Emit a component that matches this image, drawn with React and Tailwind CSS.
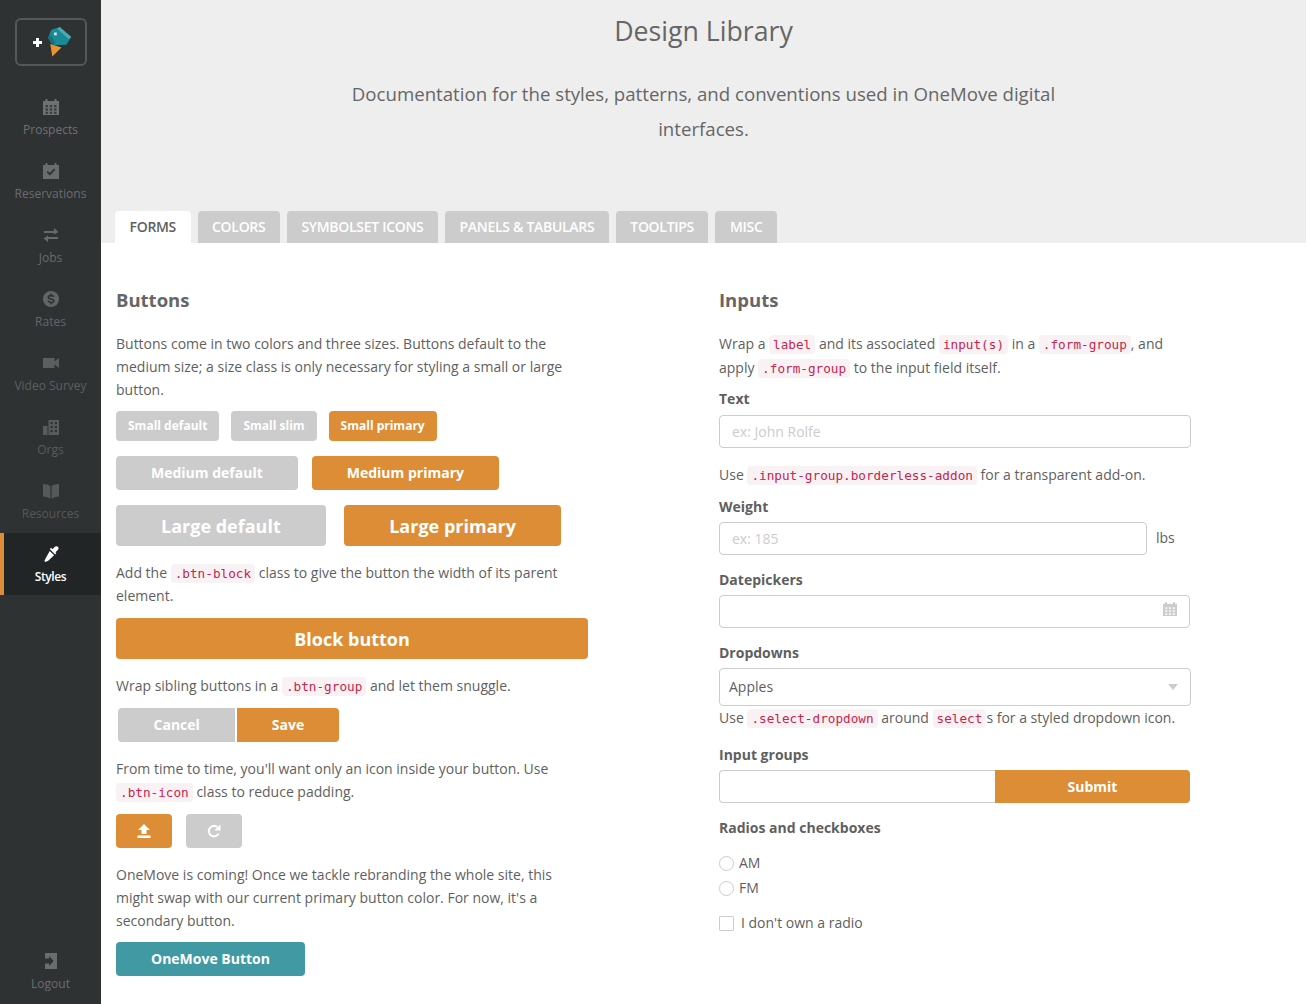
const font = { fontFamily: '"Open Sans", sans-serif' };

function Cal({ className, hole = "#2f3233" }) {
  return (
    <svg viewBox="0 0 16 16" className={className} fill="currentColor">
      <path d="M0 2h2.5V0h2v2h7V0h2v2H16v14H0z" />
      <g fill={hole} className="opacity-80">
        <rect x="2.5" y="6" width="2.5" height="2.2" />
        <rect x="6.7" y="6" width="2.5" height="2.2" />
        <rect x="11" y="6" width="2.5" height="2.2" />
        <rect x="2.5" y="9.4" width="2.5" height="2.2" />
        <rect x="6.7" y="9.4" width="2.5" height="2.2" />
        <rect x="11" y="9.4" width="2.5" height="2.2" />
        <rect x="2.5" y="12.8" width="2.5" height="2" />
        <rect x="6.7" y="12.8" width="2.5" height="2" />
        <rect x="11" y="12.8" width="2.5" height="2" />
      </g>
    </svg>
  );
}

const navIcons = {
  Prospects: <Cal className="w-4 h-4" />,
  Reservations: (
    <svg viewBox="0 0 16 16" className="w-4 h-4" fill="currentColor">
      <path d="M0 2h2.5V0h2v2h7V0h2v2H16v14H0z" />
      <path d="M4.2 8.6l2.6 2.6 5-5" fill="none" stroke="#2f3233" strokeWidth="1.9" />
    </svg>
  ),
  Jobs: (
    <svg viewBox="0 0 16 14" className="w-4 h-[14px]" fill="currentColor">
      <path d="M1 3h10V0l4.5 4L11 6.5V5H1zM15 9H5V7.5L.5 10.5 5 14v-3h10z" />
    </svg>
  ),
  Rates: (
    <svg viewBox="0 0 16 16" className="w-4 h-4">
      <circle cx="8" cy="8" r="8" fill="currentColor" />
      <path d="M11 5.6C10.2 4.5 5.3 3.9 5.3 6.2c0 2.4 5.6 1.3 5.6 3.8 0 2.2-4.8 1.8-6-.4M8 2.4v2M8 11.6v2" fill="none" stroke="#2f3233" strokeWidth="1.6" />
    </svg>
  ),
  "Video Survey": (
    <svg viewBox="0 0 16 10" className="w-4 h-[10px]" fill="currentColor">
      <path d="M0 0h11.5v3.5L16 0v10l-4.5-3.5V10H0z" />
    </svg>
  ),
  Orgs: (
    <svg viewBox="0 0 16 16" className="w-4 h-4" fill="currentColor">
      <path d="M0 7h4.5v9H0zM5.5 1H16v15H5.5z" />
      <g fill="#2f3233">
        <rect x="7.5" y="3" width="2.2" height="2.2" />
        <rect x="11.8" y="3" width="2.2" height="2.2" />
        <rect x="7.5" y="7" width="2.2" height="2.2" />
        <rect x="11.8" y="7" width="2.2" height="2.2" />
        <rect x="7.5" y="11" width="2.2" height="2.2" />
        <rect x="11.8" y="11" width="2.2" height="2.2" />
      </g>
    </svg>
  ),
  Resources: (
    <svg viewBox="0 0 16 16" className="w-4 h-4" fill="currentColor">
      <path d="M0 1c3 0 6 .8 7.4 2.2V16C6 14.6 3 13.6 0 13.6zM16 1c-3 0-6 .8-7.4 2.2V16c1.4-1.4 4.4-2.4 7.4-2.4z" />
    </svg>
  ),
  Styles: (
    <svg viewBox="0 0 16 16" className="w-4 h-4" fill="currentColor">
      <path d="M9.5 3.2L11.6 1c1-1.1 2.4-1.1 3.3-.2s.9 2.3-.2 3.3l-2.2 2.1.9.9-1.3 1.3-5.3-5.3 1.3-1.3z" />
      <path d="M6.7 4.9l4.4 4.4-5.9 5.4c-.7.6-1.3.4-1.8.8-.5.4-1 .7-1.6.1s-.3-1.1.1-1.6c.4-.5.2-1.1.8-1.8z" />
    </svg>
  ),
};

const nav = [
  { label: "Prospects", color: "text-[#6e7172]" },
  { label: "Reservations", color: "text-[#6a6d6e]" },
  { label: "Jobs", color: "text-[#676a6b]" },
  { label: "Rates", color: "text-[#636667]" },
  { label: "Video Survey", color: "text-[#5c5f60]" },
  { label: "Orgs", color: "text-[#595c5d]" },
  { label: "Resources", color: "text-[#565859]" },
];

function Sidebar() {
  return (
    <aside className="w-[101px] shrink-0 bg-[#2f3233] flex flex-col">
      <div className="mt-[18px] ml-[15px] w-[72px] h-12 border-2 border-[#55585a] rounded-md flex items-center pl-[16px] gap-[6px]">
        <span className="w-[9px] h-[9px] relative shrink-0">
          <span className="absolute left-0 right-0 top-[3px] h-[3px] bg-white" />
          <span className="absolute top-0 bottom-0 left-[3px] w-[3px] bg-white" />
        </span>
        <svg viewBox="0 0 24 30" className="w-6 h-[30px] shrink-0">
          <path d="M2.3 17L13.5 20.5 4.3 29.5z" fill="#e8952f" />
          <path d="M0 11L3.3 2.7 11.7 0 23.3 10 18.3 17.7 5 18.3z" fill="#1a8a96" />
          <path d="M11.7 0L23.3 10 20.5 12 9.5 2z" fill="#4aaab4" />
          <path d="M0 11L5 18.3 7.5 16 2.5 8z" fill="#15727d" />
          <rect x="6" y="5.5" width="2.8" height="2.8" fill="#c9e6e9" />
        </svg>
      </div>
      <div className="mt-[19px] flex flex-col">
        {nav.map((item) => (
          <div key={item.label} className={`h-[64px] flex flex-col items-center pt-[14px] ${item.color}`}>
            <div className="h-4 flex items-center">{navIcons[item.label]}</div>
            <span className="text-xs leading-4 mt-[7px] whitespace-nowrap">{item.label}</span>
          </div>
        ))}
      </div>
      <div className="h-[62px] bg-[#222526] border-l-4 border-[#dd8d36] flex flex-col items-center pt-[13px] pr-1 text-white">
        <div className="h-4 flex items-center">{navIcons.Styles}</div>
        <span className="text-xs leading-4 mt-[7px] font-semibold tracking-[-0.4px]">Styles</span>
      </div>
      <div className="mt-auto h-[51px] flex flex-col items-center text-[#6a6d6e]">
        <svg viewBox="0 0 12 16" className="w-3 h-4" fill="currentColor">
          <path d="M0 0h12v16H0z" />
          <path d="M0 5.6h4.2V3l4.4 5-4.4 5v-2.6H0z" fill="#2f3233" />
        </svg>
        <span className="text-xs leading-4 mt-[7px]">Logout</span>
      </div>
    </aside>
  );
}

const tabs = ["FORMS", "COLORS", "SYMBOLSET ICONS", "PANELS & TABULARS", "TOOLTIPS", "MISC"];

function Header() {
  return (
    <header className="h-[243px] bg-[#eeeeee] flex flex-col text-[#666666]">
      <h1 className="text-[26.7px] leading-[36px] mt-[13px] text-center">Design Library</h1>
      <p className="text-[18.65px] leading-[35px] mt-[27px] mx-auto w-[740px] text-center">
        Documentation for the styles, patterns, and conventions used in OneMove digital interfaces.
      </p>
      <nav className="mt-auto ml-[14px] flex gap-[7px]">
        {tabs.map((t, i) => (
          <div
            key={t}
            className={`h-8 px-[14.5px] rounded-t flex items-center text-sm font-semibold tracking-[-0.3px] ${
              i === 0 ? "bg-white text-[#5f5f5f]" : "bg-[#cccccc] text-white"
            }`}
          >
            {t}
          </div>
        ))}
      </nav>
    </header>
  );
}

function Code({ children }) {
  return (
    <code className="bg-[#f9f2f4] text-[#c7254e] rounded px-1 py-[2px] leading-none text-[12.7px] font-['DejaVu_Sans_Mono',monospace]">
      {children}
    </code>
  );
}

function Btn({ className = "", children }) {
  return (
    <button className={`rounded font-bold text-white flex items-center justify-center ${className}`}>{children}</button>
  );
}

function Label({ className = "", children }) {
  return <div className={`h-[23px] leading-[23px] font-bold text-[#5f5f5f] ${className}`}>{children}</div>;
}

function Field({ className = "", placeholder }) {
  return (
    <input
      placeholder={placeholder}
      className={`block h-[33px] border border-[#cccccc] rounded px-3 bg-white outline-none placeholder:text-[#cccccc] ${className}`}
    />
  );
}

function ButtonsColumn() {
  return (
    <section className="w-[472px] shrink-0">
      <h2 className="text-[18.5px] font-bold leading-7 text-[#666666]">Buttons</h2>
      <p className="mt-[18px]">
        Buttons come in two colors and three sizes. Buttons default to the medium size; a size class is only necessary for styling a small or large button.
      </p>
      <div className="mt-[10px] flex gap-3">
        <Btn className="h-[30px] px-3 text-xs bg-[#cccccc]">Small default</Btn>
        <Btn className="h-[30px] px-3 text-xs bg-[#cccccc]">Small slim</Btn>
        <Btn className="h-[30px] px-3 text-xs bg-[#dd8d36]">Small primary</Btn>
      </div>
      <div className="mt-[15px] flex gap-[14px]">
        <Btn className="h-[34px] px-[35px] text-sm bg-[#cccccc]">Medium default</Btn>
        <Btn className="h-[34px] px-[35px] text-sm bg-[#dd8d36]">Medium primary</Btn>
      </div>
      <div className="mt-[15px] flex gap-[18px]">
        <Btn className="h-[41px] px-[45px] text-lg bg-[#cccccc]">Large default</Btn>
        <Btn className="h-[41px] px-[45.5px] text-lg bg-[#dd8d36]">Large primary</Btn>
      </div>
      <p className="mt-[15px]">
        Add the <Code>.btn-block</Code> class to give the button the width of its parent element.
      </p>
      <Btn className="mt-[11px] w-full h-[41px] text-lg bg-[#dd8d36]">Block button</Btn>
      <p className="mt-[15px]">
        Wrap sibling buttons in a <Code>.btn-group</Code> and let them snuggle.
      </p>
      <div className="mt-[11px] ml-[2px] flex gap-[2px]">
        <Btn className="h-[34px] px-[35.5px] text-sm bg-[#cccccc] rounded-r-none">Cancel</Btn>
        <Btn className="h-[34px] px-[34.5px] text-sm bg-[#dd8d36] rounded-l-none">Save</Btn>
      </div>
      <p className="mt-[15px]">
        From time to time, you'll want only an icon inside your button. Use <Code>.btn-icon</Code> class to reduce padding.
      </p>
      <div className="mt-[11px] flex gap-[14px]">
        <Btn className="h-[34px] w-14 bg-[#dd8d36]">
          <svg viewBox="0 0 14 14" className="w-[14px] h-[14px]" fill="currentColor">
            <path d="M7 0l6 6H9.5v4h-5V6H1zM.5 11.5h13V14H.5z" />
          </svg>
        </Btn>
        <Btn className="h-[34px] w-14 bg-[#cccccc]">
          <svg viewBox="0 0 14 14" className="w-[14px] h-[14px]" fill="none" stroke="currentColor" strokeWidth="2">
            <path d="M11.6 9.6A5.2 5.2 0 1 1 10.4 3.2" />
            <path d="M13.5 0.5v6h-6z" fill="currentColor" stroke="none" />
          </svg>
        </Btn>
      </div>
      <p className="mt-[15px]">
        OneMove is coming! Once we tackle rebranding the whole site, this might swap with our current primary button color. For now, it's a secondary button.
      </p>
      <Btn className="mt-[10px] h-[34px] px-[35px] text-sm bg-[#4099a3]">OneMove Button</Btn>
    </section>
  );
}

function InputsColumn() {
  return (
    <section className="w-[472px] shrink-0">
      <h2 className="text-[18.5px] font-bold leading-7 text-[#666666]">Inputs</h2>
      <p className="mt-[18px] leading-6">
        Wrap a <Code>label</Code> and its associated <Code>input(s)</Code> in a <Code>.form-group</Code>, and apply <Code>.form-group</Code> to the input field itself.
      </p>
      <Label className="mt-[7px]">Text</Label>
      <Field className="mt-[5px] w-full" placeholder="ex: John Rolfe" />
      <p className="mt-[15px]">
        Use <Code>.input-group.borderless-addon</Code> for a transparent add-on.
      </p>
      <Label className="mt-[9px]">Weight</Label>
      <div className="mt-1 flex items-center">
        <Field className="w-[428px]" placeholder="ex: 185" />
        <span className="ml-[9px] -mt-[2px]">lbs</span>
      </div>
      <Label className="mt-[13px]">Datepickers</Label>
      <div className="mt-1 relative w-[471px]">
        <Field className="w-full" />
        <Cal hole="#ffffff" className="absolute right-[13px] top-[7px] w-[14px] h-[14px] text-[#cccccc]" />
      </div>
      <Label className="mt-[13px]">Dropdowns</Label>
      <div className="mt-1 h-[38px] border border-[#cccccc] rounded flex items-center justify-between pl-[9px] pr-[12px]">
        <span className="-mt-[2px]">Apples</span>
        <span className="w-0 h-0 border-x-[5px] border-x-transparent border-t-[6px] border-t-[#cccccc]" />
      </div>
      <p>
        Use <Code>.select-dropdown</Code> around <Code>select</Code>s for a styled dropdown icon.
      </p>
      <Label className="mt-[14px]">Input groups</Label>
      <div className="mt-1 flex w-[471px]">
        <Field className="w-[276px] rounded-r-none border-r-0" />
        <Btn className="w-[195px] h-[33px] text-sm bg-[#dd8d36] rounded-l-none">Submit</Btn>
      </div>
      <Label className="mt-[13px]">Radios and checkboxes</Label>
      <div className="mt-3 flex items-center h-[23px]">
        <span className="w-[15px] h-[15px] rounded-full border border-[#cccccc] mt-[1px]" />
        <span className="ml-[5px]">AM</span>
      </div>
      <div className="mt-[2px] flex items-center h-[23px]">
        <span className="w-[15px] h-[15px] rounded-full border border-[#cccccc] mt-[1px]" />
        <span className="ml-[5px]">FM</span>
      </div>
      <div className="mt-3 flex items-center h-[23px]">
        <span className="w-[15px] h-[15px] border border-[#cccccc] rounded-[1px] mt-[1px]" />
        <span className="ml-[7px]">I don't own a radio</span>
      </div>
    </section>
  );
}

export default function App() {
  return (
    <div style={font} className="h-[1004px] flex overflow-hidden bg-white text-sm leading-[23px] text-[#5f5f5f]">
      <Sidebar />
      <main className="flex-1 min-w-0 pr-[2px]">
        <Header />
        <div className="mt-[43px] ml-[15px] flex gap-[131px]">
          <ButtonsColumn />
          <InputsColumn />
        </div>
      </main>
    </div>
  );
}
